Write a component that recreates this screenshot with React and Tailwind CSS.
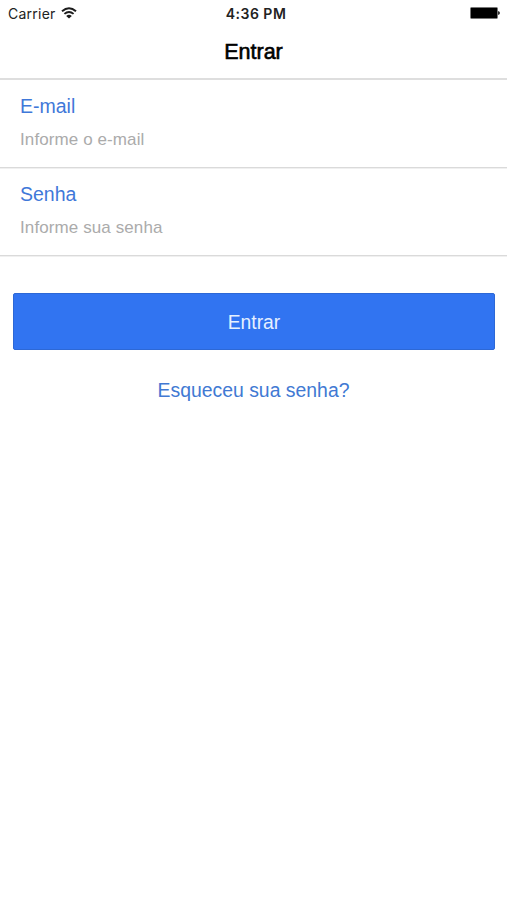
function StatusBar() {
  return (
    <div className="flex h-[26px] items-center justify-between pl-[8px] pr-[7px] font-['Inter',sans-serif] text-[#222]">
      <div className="flex flex-1 items-center gap-[5px]">
        <span className="pt-px text-[14px] leading-[26px] tracking-[0.25px]">Carrier</span>
        <svg width="16" height="12" viewBox="0 0 16 12" fill="none" stroke="#1c1c1c">
          <path d="M1 4.2Q8-1.8 15 4.2" strokeWidth="2" />
          <path d="M3.4 6.9Q8 2.9 12.6 6.9" strokeWidth="1.9" />
          <path d="M8 11.6L5.2 8.9Q8 6.7 10.8 8.9Z" fill="#1c1c1c" stroke="none" />
        </svg>
      </div>
      <span className="pl-[4px] pt-px text-[14px] font-semibold leading-[26px] tracking-[0.5px]">4:36 PM</span>
      <div className="flex flex-1 items-center justify-end">
        <svg width="30" height="12" viewBox="0 0 30 12">
          <rect x="0.5" y="0.5" width="27" height="11" rx="1" fill="#000" stroke="#777" />
          <path d="M28 4Q30 4.4 30 6T28 8Z" fill="#333" />
        </svg>
      </div>
    </div>
  );
}

function Field({ label, placeholder, type }) {
  return (
    <label className="block h-[88px] border-b border-[#dadada] px-[20px] pt-[13px] shadow-[0_1px_0_#f0f0f0]">
      <span className="block text-[19.5px] leading-[26px] text-[#3f78d9]">{label}</span>
      <input
        type={type}
        placeholder={placeholder}
        className="mt-[9px] block h-[24px] w-full p-0 text-[17px] leading-[24px] tracking-[0.1px] outline-none placeholder:text-[#ababab]"
      />
    </label>
  );
}

export default function App() {
  return (
    <div className="min-h-screen bg-white font-['Liberation_Sans',Arial,sans-serif]">
      <header className="h-[80px] border-b-2 border-[#dedede]">
        <StatusBar />
        <h1 className="text-center text-[21.5px] leading-[52px] text-black [-webkit-text-stroke:0.6px_black]">Entrar</h1>
      </header>
      <form>
        <Field label="E-mail" placeholder="Informe o e-mail" type="text" />
        <Field label="Senha" placeholder="Informe sua senha" type="password" />
        <div className="pl-[13px] pr-[12px] pt-[37px]">
          <button
            type="button"
            className="block h-[57px] w-full rounded-[2px] border border-[#2d68d6] bg-[#3174f1] pt-[3px] text-[19.3px] text-[#e6f0ff]"
          >
            Entrar
          </button>
        </div>
        <a className="mt-[27px] block text-center text-[19.4px] leading-[26px] text-[#4179d3]">Esqueceu sua senha?</a>
      </form>
    </div>
  );
}
